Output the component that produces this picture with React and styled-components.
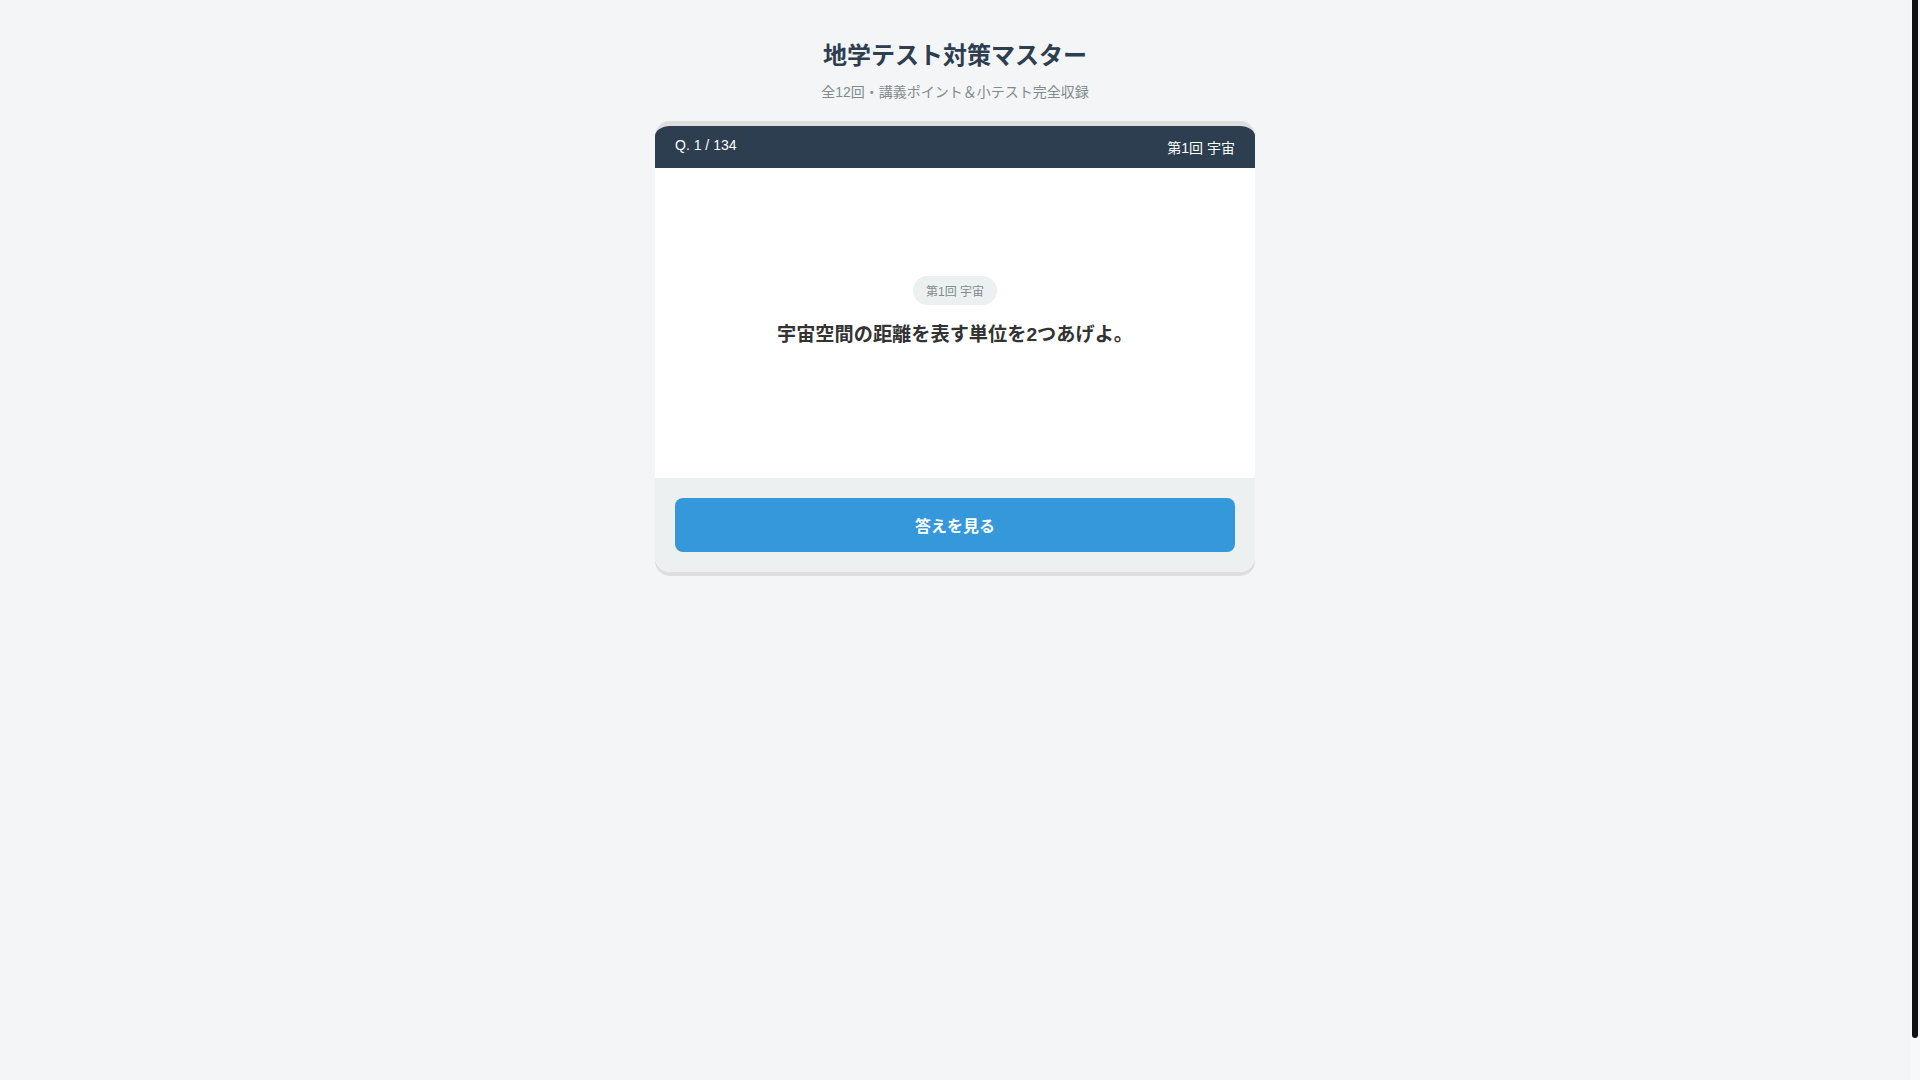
import styled, { createGlobalStyle } from "styled-components";

const GlobalStyle = createGlobalStyle`
  body {
    margin: 0;
    padding: 20px 30px 20px 20px;
    min-height: 100vh;
    background: #f4f5f7;
    font-family: "Liberation Sans", Arial, "Noto Sans CJK JP", sans-serif;
    color: #333;
  }
`;

// scrollbar of the original page, drawn over the right edge
const ScrollTrack = styled.div`
  position: fixed;
  top: 0;
  right: 0;
  width: 10px;
  height: 100vh;
  background: #f7f8f9;
`;

const ScrollThumb = styled.div`
  position: absolute;
  top: 0;
  right: 2px;
  width: 6px;
  height: 1038px;
  border-radius: 0 0 3px 3px;
  background: #111;
`;

const Page = styled.div`
  max-width: 600px;
  margin: 0 auto;
  padding-top: 16px;
`;

const Title = styled.h1`
  margin: 0 0 10px;
  text-align: center;
  font-size: 24px;
  font-weight: 700;
  color: #2c3e50;
`;

const Subtitle = styled.p`
  margin: 0 0 20px;
  text-align: center;
  font-size: 14px;
  color: #7f8c8d;
`;

const Card = styled.div`
  border-top: 5px solid #dedede;
  border-radius: 15px;
  overflow: hidden;
  background: #fff;
  box-shadow: 0 4px 0 #dcdee1;
`;

const CardHeader = styled.div`
  display: flex;
  justify-content: space-between;
  padding: 11px 20px;
  background: #2c3e50;
  color: #fff;
  font-size: 14px;
`;

const CardBody = styled.div`
  display: flex;
  flex-direction: column;
  align-items: center;
  padding: 108px 30px 131px;
  background: #fff;
`;

const Tag = styled.span`
  padding: 6px 13px;
  border-radius: 20px;
  background: #ecf0f1;
  color: #7f8c8d;
  font-size: 12px;
  margin-bottom: 14px;
`;

const Question = styled.div`
  font-size: 19.2px;
  font-weight: 700;
  color: #333;
  text-align: center;
`;

const CardFooter = styled.div`
  padding: 20px;
  background: #ecf0f1;
`;

const Button = styled.button`
  display: block;
  width: 100%;
  padding: 15px;
  border: none;
  border-radius: 8px;
  background: #3498db;
  color: #fff;
  font-family: inherit;
  font-size: 16px;
  font-weight: 700;
  cursor: pointer;
`;

function App() {
  const total = 134;
  const index = 1;

  return (
    <>
      <GlobalStyle />
      <Page>
        <Title>地学テスト対策マスター</Title>
        <Subtitle>全12回・講義ポイント＆小テスト完全収録</Subtitle>
        <Card>
          <CardHeader>
            <span>Q. {index} / {total}</span>
            <span>第1回 宇宙</span>
          </CardHeader>
          <CardBody>
            <Tag>第1回 宇宙</Tag>
            <Question>宇宙空間の距離を表す単位を2つあげよ。</Question>
          </CardBody>
          <CardFooter>
            <Button>答えを見る</Button>
          </CardFooter>
        </Card>
      </Page>
      <ScrollTrack>
        <ScrollThumb />
      </ScrollTrack>
    </>
  );
}

export default App;
